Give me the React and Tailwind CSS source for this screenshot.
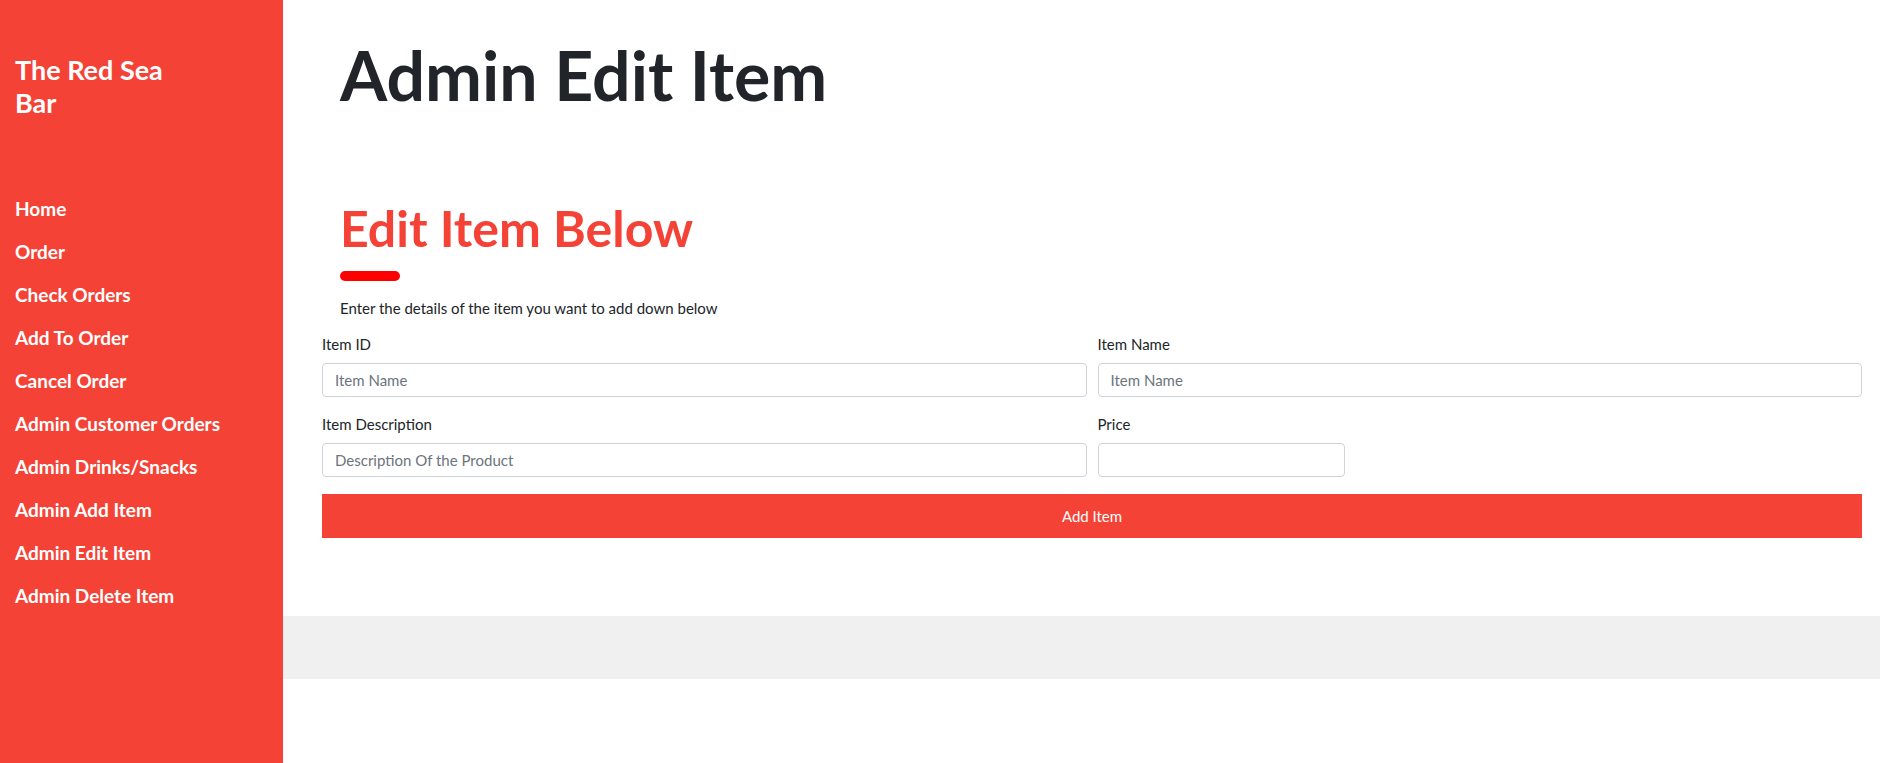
const links = [
  "Home",
  "Order",
  "Check Orders",
  "Add To Order",
  "Cancel Order",
  "Admin Customer Orders",
  "Admin Drinks/Snacks",
  "Admin Add Item",
  "Admin Edit Item",
  "Admin Delete Item",
];

export default function App() {
  return (
    <div className="flex min-h-[763px] font-['Lato',sans-serif] text-[#212529]">
      {/* Sidebar */}
      <aside className="w-[283px] shrink-0 bg-[#f44336] px-[15px] text-white">
        <h2 className="pt-[53px] text-[27px] font-bold leading-[33px]">
          The Red Sea
          <br />
          Bar
        </h2>
        <nav className="mt-[68px] flex flex-col">
          {links.map((l) => (
            <a key={l} href="#" className="text-[19px] font-bold leading-[43px] text-white">
              {l}
            </a>
          ))}
        </nav>
      </aside>

      {/* Main */}
      <main className="flex flex-1 flex-col">
        <div className="pl-[57px]">
          <h1 className="pt-[41px] text-[68px] font-bold leading-none text-[#212529]">Admin Edit Item</h1>
          <h2 className="mt-[94px] text-[50px] font-bold leading-none text-[#f44336]">Edit Item Below</h2>
          <div className="mt-[18px] h-[10px] w-[60px] rounded-full bg-[#ff0000]" />
          <p className="mt-[16px] text-[15px] leading-[22px]">
            Enter the details of the item you want to add down below
          </p>
        </div>

        <form className="mt-[14px] pl-[39px] pr-[18px]" onSubmit={(e) => e.preventDefault()}>
          <div className="grid grid-cols-2 gap-x-[11px]">
            <div>
              <label className="block text-[15px] leading-[22px]">Item ID</label>
              <input
                type="text"
                placeholder="Item Name"
                className="mt-[8px] h-[34px] w-full rounded-[4px] border border-[#ced4da] px-[12px] text-[15px] placeholder:text-[#6c757d] focus:outline-none"
              />
            </div>
            <div>
              <label className="block text-[15px] leading-[22px]">Item Name</label>
              <input
                type="text"
                placeholder="Item Name"
                className="mt-[8px] h-[34px] w-full rounded-[4px] border border-[#ced4da] px-[12px] text-[15px] placeholder:text-[#6c757d] focus:outline-none"
              />
            </div>
            <div className="mt-[16px]">
              <label className="block text-[15px] leading-[22px]">Item Description</label>
              <input
                type="text"
                placeholder="Description Of the Product"
                className="mt-[8px] h-[34px] w-full rounded-[4px] border border-[#ced4da] px-[12px] text-[15px] placeholder:text-[#6c757d] focus:outline-none"
              />
            </div>
            <div className="mt-[16px]">
              <label className="block text-[15px] leading-[22px]">Price</label>
              <input
                type="text"
                className="mt-[8px] h-[34px] w-[247px] rounded-[4px] border border-[#ced4da] px-[12px] text-[15px] focus:outline-none"
              />
            </div>
          </div>
          <button
            type="submit"
            className="mt-[17px] h-[44px] w-full bg-[#f44336] text-[15px] text-white"
          >
            Add Item
          </button>
        </form>

        <div className="mt-[78px] h-[63px] bg-[#f0f0f0]" />
      </main>
    </div>
  );
}
